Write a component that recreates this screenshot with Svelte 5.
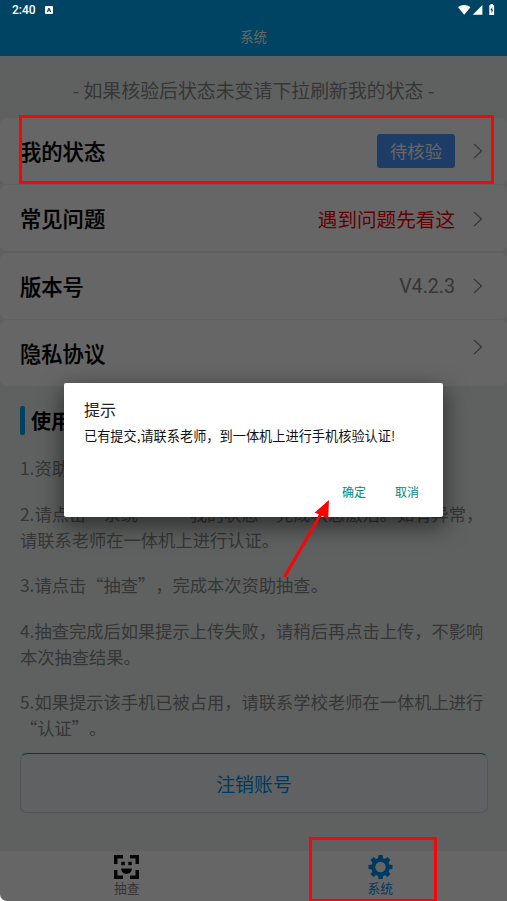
<script lang="ts">
    type Row = {
        title: string;
        kind: "status" | "alert" | "plain";
        value?: string;
    };

    const rows: Row[] = [
        { title: "我的状态", kind: "status", value: "待核验" },
        { title: "常见问题", kind: "alert", value: "遇到问题先看这" },
        { title: "版本号", kind: "plain", value: "V4.2.3" },
        { title: "隐私协议", kind: "plain" },
    ];

    const steps = [
        "1.资助抽查前请先完成手机核验认证。",
        "2.请点击“系统”—“我的状态”完成状态激活。如有异常，\n请联系老师在一体机上进行认证。",
        "3.请点击“抽查”，完成本次资助抽查。",
        "4.抽查完成后如果提示上传失败，请稍后再点击上传，不影响\n本次抽查结果。",
        "5.如果提示该手机已被占用，请联系学校老师在一体机上进行\n“认证”。",
    ];

    const teeth = [0, 45, 90, 135, 180, 225, 270, 315];

    let dialogOpen = $state(true);

    const close = () => {
        dialogOpen = false;
    }
</script>

<div class="screen" lang="zh-CN">
    <header>
        <div class="status-bar">
            <span class="clock">2:40</span>
            <svg class="app-badge" viewBox="0 0 8 8">
                <rect width="8" height="8" rx="1" fill="#fff" />
                <path d="M2.2 6 4 2l1.8 4M2.9 4.8h2.2" fill="none" stroke="#003a55" />
            </svg>
            <svg class="signals" viewBox="0 0 38 12">
                <path d="M0 3.200C3.600.1 8.800.1 12.400 3.200L6.200 10.800z" />
                <path d="M24.400 1v9.800h-9.600z" />
                <path d="M31.300 1.200h1.200V0h2.400v1.200h1.200v9.800h-4.800z" />
                <path d="M34.300 2.800 32.300 6.200h1.200v3L35.200 5.400h-1.100z" fill="#004466" />
            </svg>
        </div>
        <h1>系统</h1>
    </header>

    <p class="hint">- 如果核验后状态未变请下拉刷新我的状态 -</p>

    <div class="rows">
        {#each rows as row}
            <div class="row">
                <span class="row-title">{row.title}</span>
                {#if row.value}
                    <span class="value {row.kind}">{row.value}</span>
                {/if}
                <svg class="chevron" class:raised={!row.value} viewBox="0 0 10 16">
                    <path d="M1 1l7.500 7L1 15" />
                </svg>
            </div>
        {/each}
    </div>

    <section class="guide">
        <h2>使用说明</h2>
        {#each steps as step}
            <p>{step}</p>
        {/each}
        <button class="logout">注销账号</button>
    </section>

    <nav>
        <div class="tab">
            <svg viewBox="0 0 25 24">
                <path d="M0 0h9v3.500H3.500V9H0zM16 0h9v9h-3.500V3.500H16zM0 15h3.500v5.500H9V24H0zM21.500 15H25v9h-9v-3.500h5.500z" />
                <path d="M7.300 6.800h3.500v3.400H7.300zM14.300 6.800h3.500v3.400h-3.500zM7.200 13.500h10.700c0 7.200-10.700 7.200-10.700 0z" />
            </svg>
            <span>抽查</span>
        </div>
        <div class="tab active">
            <svg viewBox="-12.5 -12 25 24">
                {#each teeth as angle}
                    <path d="M-2.800-7 -2.100-12h4.200L2.800-7z" transform="rotate({angle})" />
                {/each}
                <circle r="7.200" fill="none" stroke="currentColor" stroke-width="4" />
            </svg>
            <span>系统</span>
        </div>
    </nav>

    {#if dialogOpen}
        <div class="scrim">
            <div class="dialog" role="dialog" aria-labelledby="dialog-title">
                <h3 id="dialog-title">提示</h3>
                <p>已有提交,请联系老师，到一体机上进行手机核验认证!</p>
                <div class="actions">
                    <button onclick={close}>确定</button>
                    <button onclick={close}>取消</button>
                </div>
            </div>
        </div>
    {/if}

    <div class="mark mark-status"></div>
    <div class="mark mark-tab"></div>
    <svg class="arrow" viewBox="0 0 48 80">
        <path d="M1.500 77 38.500 13" stroke="#f20808" stroke-width="3.200" />
        <path d="M46 0 31.500 12.800l5.300 1.700 4 2.300 4.400 2z" fill="#f00" />
    </svg>
</div>

<style>
    :global(body) {
        margin: 0;
        background: #fff;
    }

    .screen {
        position: relative;
        box-sizing: border-box;
        width: 507px;
        height: 901px;
        overflow: hidden;
        display: flex;
        flex-direction: column;
        background: #eef2f0;
        border-bottom-left-radius: 7px;
        font-family: "Noto Sans CJK SC", sans-serif;
        text-spacing-trim: space-all;
        color: #000;
    }

    h1, h2, h3, p {
        margin: 0;
        font-weight: 400;
    }

    button {
        font-family: inherit;
        padding: 0;
        border: 0;
        background: none;
    }

    header {
        height: 56px;
        background: #00aaf8;
        color: #fff;
    }

    .status-bar {
        position: relative;
        z-index: 2;
        height: 20px;
        display: flex;
        align-items: center;
        padding: 0 12px;
    }

    .clock {
        width: 33px;
        font: 500 12px/20px Roboto, sans-serif;
    }

    .app-badge {
        width: 8px;
        height: 8px;
    }

    .signals {
        width: 38px;
        height: 12px;
        margin-left: auto;
        margin-right: -1px;
        margin-bottom: 1px;
        fill: #fff;
    }

    h1 {
        font-size: 13.3px;
        line-height: 34px;
        text-align: center;
    }

    .hint {
        height: 61.5px;
        line-height: 67px;
        text-align: center;
        font-size: 18.9px;
        color: #888;
    }

    .rows {
        display: flex;
        flex-direction: column;
        gap: 1.5px;
    }

    .row {
        box-sizing: border-box;
        height: 66px;
        padding: 1px 24px 0 20px;
        display: flex;
        align-items: center;
        background: #fff;
        border-radius: 7px;
    }

    .row-title {
        flex: 1;
        padding-bottom: 1.6px;
        font-size: 21.3px;
        font-weight: 500;
        -webkit-text-stroke: 0.2px #000;
    }

    .value {
        font-size: 19.6px;
    }

    .value.status {
        width: 78px;
        height: 34px;
        line-height: 34px;
        border-radius: 3px;
        text-align: center;
        font-size: 17.3px;
        background: #4a98ff;
        color: #fff;
    }

    .value.alert {
        color: #f00;
    }

    .value.plain {
        font-family: Roboto, sans-serif;
        color: #888;
    }

    .chevron {
        width: 10px;
        height: 16px;
        margin-left: 18px;
        fill: none;
        stroke: #888;
        stroke-width: 1.2;
    }

    .chevron.raised {
        margin-bottom: 14px;
    }

    .guide {
        flex: 1;
        padding: 20px 20px 0;
        color: #888;
    }

    h2 {
        display: flex;
        align-items: center;
        gap: 6px;
        height: 29px;
        margin-bottom: 20.3px;
        font-size: 20px;
        font-weight: 700;
        color: #000;
    }

    h2::before {
        content: "";
        width: 5px;
        height: 29px;
        border-radius: 2px;
        background: #00a0f0;
    }

    .guide p {
        margin-bottom: 19.8px;
        font-size: 17.27px;
        line-height: 25.8px;
        white-space: pre;
    }

    .logout {
        display: block;
        box-sizing: border-box;
        width: 468px;
        height: 60px;
        margin-top: -7.8px;
        border: 1px solid #c8d4e6;
        border-top-color: #0090f0;
        border-radius: 7px;
        background: #f1f2f7;
        font-size: 18.9px;
        line-height: 60px;
        color: #0090ec;
    }

    nav {
        height: 50px;
        display: flex;
        background: #fff;
    }

    .tab {
        flex: 1;
        display: flex;
        flex-direction: column;
        align-items: center;
        padding-top: 4px;
        font-size: 12.7px;
        line-height: 18px;
        color: #888;
    }

    .tab svg {
        width: 25px;
        height: 24px;
        fill: #111;
    }

    .tab.active {
        color: #0090ec;
    }

    .tab.active svg {
        fill: currentColor;
    }

    .scrim {
        position: absolute;
        inset: 0;
        display: flex;
        align-items: center;
        justify-content: center;
        padding-bottom: 1px;
        background: rgba(0, 0, 0, 0.6);
    }

    .dialog {
        box-sizing: border-box;
        width: 379px;
        height: 134px;
        padding: 14px 20px 0;
        border-radius: 2px;
        background: #fff;
        box-shadow: 0 8px 22px 2px rgba(0, 0, 0, 0.5);
    }

    .dialog h3 {
        font-size: 16px;
        line-height: 24px;
        color: #222;
    }

    .dialog p {
        margin-top: 5px;
        font-size: 13.2px;
        line-height: 20px;
        white-space: nowrap;
        color: #111;
    }

    .actions {
        display: flex;
        justify-content: flex-end;
        gap: 29px;
        margin-top: 36px;
        padding-right: 4px;
    }

    .actions button {
        font-size: 12px;
        line-height: 20px;
        color: #00897b;
    }

    .mark {
        position: absolute;
        z-index: 3;
        box-sizing: border-box;
        border: 3px solid #f80606;
        pointer-events: none;
    }

    .mark-status {
        left: 19px;
        top: 115px;
        width: 475px;
        height: 69px;
    }

    .mark-tab {
        left: 309px;
        top: 837px;
        width: 128px;
        height: 65px;
    }

    .arrow {
        position: absolute;
        z-index: 3;
        left: 283px;
        top: 500px;
        width: 48px;
        height: 80px;
        pointer-events: none;
    }
</style>
